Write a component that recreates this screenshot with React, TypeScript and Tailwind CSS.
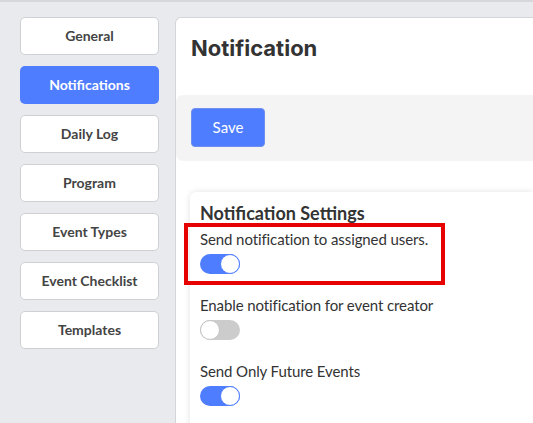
import React, { useState } from "react";

const tabs = [
  "General",
  "Notifications",
  "Daily Log",
  "Program",
  "Event Types",
  "Event Checklist",
  "Templates",
];

function Toggle({ on, onClick }: { on: boolean; onClick: () => void }) {
  return (
    <button
      onClick={onClick}
      className={`relative block w-[40px] h-[20px] rounded-full ${on ? "bg-[#4f7dff]" : "bg-[#cccccc]"}`}
    >
      <span
        className={`absolute top-0 w-[20px] h-[20px] rounded-full bg-white border ${
          on ? "left-[20px] border-[#4f7dff]" : "left-0 border-[#c4c4c4]"
        }`}
      />
    </button>
  );
}

export default function App() {
  const [settings, setSettings] = useState([
    { label: "Send notification to assigned users.", on: true },
    { label: "Enable notification for event creator", on: false },
    { label: "Send Only Future Events", on: true },
  ]);

  const flip = (i: number) =>
    setSettings(settings.map((s, j) => (j === i ? { ...s, on: !s.on } : s)));

  return (
    <div
      className="w-[533px] h-[423px] overflow-hidden bg-[#e9eaed] border-t-2 border-[#d6d7da] flex"
      style={{ fontFamily: "Lato, 'Open Sans', sans-serif" }}
    >
      {/* Sidebar */}
      <div className="w-[175px] shrink-0 pl-[20px] pr-[16px] pt-[15px] flex flex-col gap-[11px]">
        {tabs.map((t) => (
          <button
            key={t}
            className={`h-[38px] w-[139px] rounded-[5px] text-[14px] font-bold pb-[1px] ${
              t === "Notifications"
                ? "bg-[#4f7dff] text-white"
                : "bg-white text-[#444] border border-[#cfd0d3]"
            }`}
          >
            {t}
          </button>
        ))}
      </div>

      {/* Main card */}
      <div className="flex-1 mt-[15px] bg-white border-l border-t border-[#d4d5d8] rounded-tl-[6px]">
        <h1 className="pl-[15px] pt-[14px] h-[77px] text-[22px] font-bold text-[#333]" style={{ fontFamily: "Inter, Lato, sans-serif" }}>
          Notification
        </h1>
        <div className="bg-[#f4f4f5] rounded-l-[7px] h-[66px] pl-[15px] pt-[13px]">
          <button className="w-[74px] h-[39px] rounded-[4px] bg-[#4f7dff] border border-[#6e8ff0] text-white text-[15px]">
            Save
          </button>
        </div>
        <div className="ml-[14px] mt-[31px] bg-white rounded-tl-[6px] shadow-[0_0_6px_rgba(0,0,0,0.12)] pl-[10px] pt-[9px] h-[300px] relative">
          <h2 className="text-[18px] font-bold text-[#333] leading-[24px]">Notification Settings</h2>
          <div className="flex flex-col gap-[21px] mt-[4px]">
            {settings.map((s, i) => (
              <div key={s.label} className="flex flex-col gap-[5px]">
                <span className="text-[15px] leading-[20px] text-[#333] tracking-[-0.1px]">{s.label}</span>
                <Toggle on={s.on} onClick={() => flip(i)} />
              </div>
            ))}
          </div>
          <div className="absolute left-[-6px] top-[31px] w-[261px] h-[62px] border-[4px] border-[#e60000] pointer-events-none" />
        </div>
      </div>
    </div>
  );
}
